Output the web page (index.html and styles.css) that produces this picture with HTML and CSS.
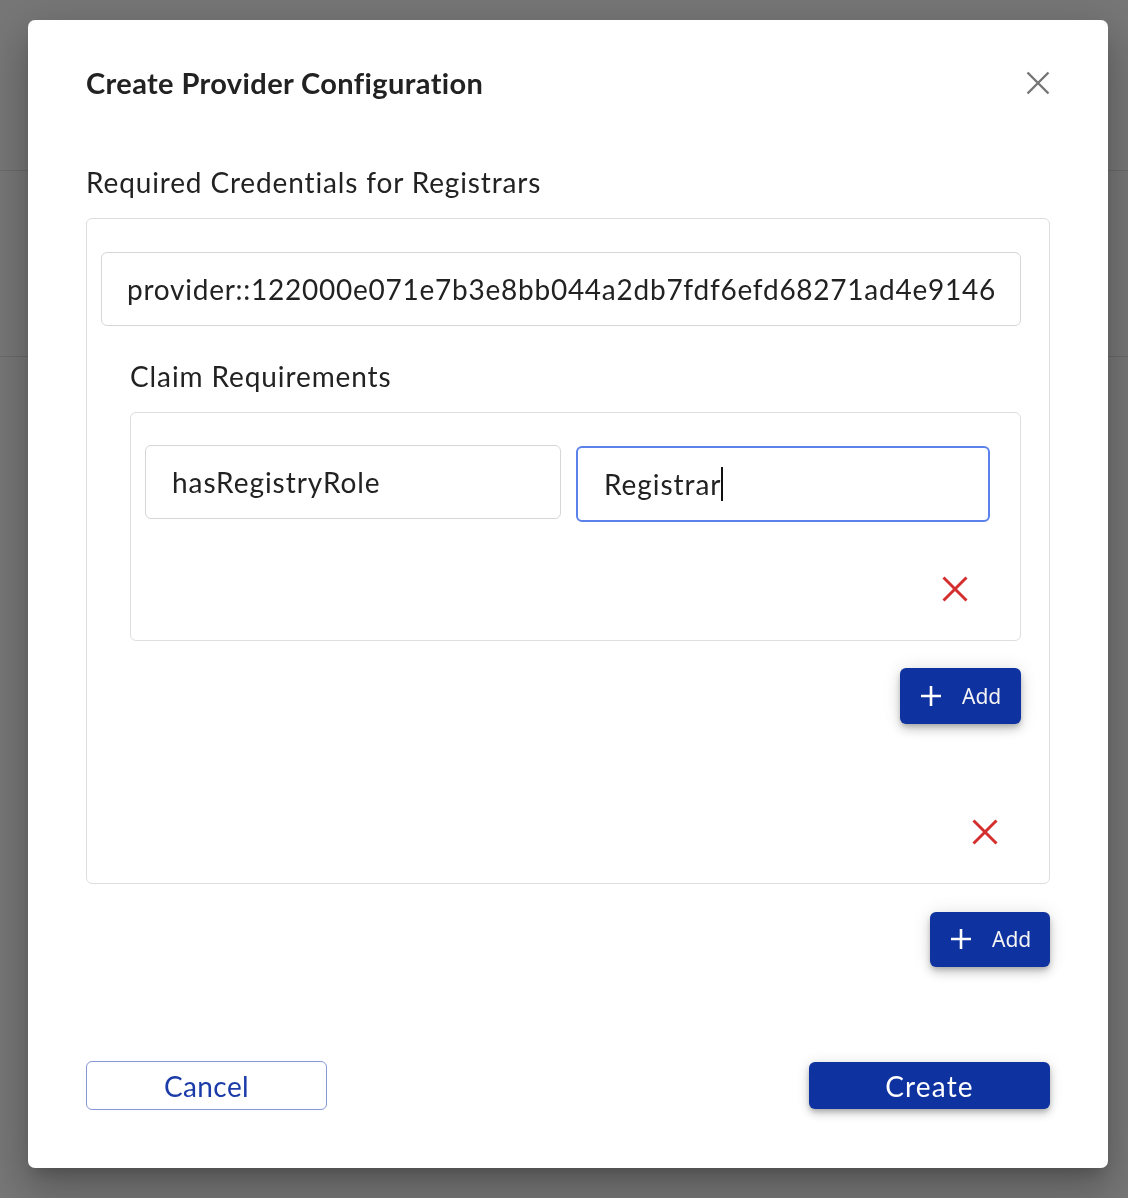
FILE: index.html
```html
<!DOCTYPE html>
<html>
<head>
  <meta charset="UTF-8">
  <title>Create Provider Configuration</title>
  <link rel="stylesheet" href="styles.css">
</head>
<body>
  <!-- page behind the dialog, dimmed -->
  <div class="page">
    <div class="page-header"></div>
    <div class="page-row"></div>
  </div>

  <div class="dialog">
    <div class="dialog-header">
      <h2 class="dialog-title">Create Provider Configuration</h2>
      <button class="close-button" title="Close">
        <svg width="24" height="24" viewBox="0 0 24 24">
          <path d="M1.5 1.5 L22.5 22.5 M22.5 1.5 L1.5 22.5" stroke="#757575" stroke-width="2.4" fill="none"/>
        </svg>
      </button>
    </div>

    <div class="section-label">Required Credentials for Registrars</div>

    <div class="credential-box">
      <div class="field">provider::122000e071e7b3e8bb044a2db7fdf6efd68271ad4e9146</div>

      <div class="claims">
        <div class="claims-label">Claim Requirements</div>
        <div class="claims-box">
          <div class="claim-row">
            <div class="field">hasRegistryRole</div>
            <div class="field focused">Registrar<span class="caret"></span></div>
          </div>
          <div class="remove-row">
            <button class="remove-button" title="Remove claim">
              <svg width="26" height="26" viewBox="0 0 26 26">
                <path d="M1.5 1.5 L24.5 24.5 M24.5 1.5 L1.5 24.5" stroke="#d32f2f" stroke-width="3" fill="none"/>
              </svg>
            </button>
          </div>
        </div>
        <div class="add-row">
          <button class="add-button">
            <svg width="20" height="20" viewBox="0 0 20 20">
              <path d="M10 0 V20 M0 10 H20" stroke="#fff" stroke-width="2.6" fill="none"/>
            </svg>
            <span>Add</span>
          </button>
        </div>
      </div>

      <div class="remove-row outer">
        <button class="remove-button" title="Remove credential">
          <svg width="26" height="26" viewBox="0 0 26 26">
            <path d="M1.5 1.5 L24.5 24.5 M24.5 1.5 L1.5 24.5" stroke="#d32f2f" stroke-width="3" fill="none"/>
          </svg>
        </button>
      </div>
    </div>

    <div class="add-row outer">
      <button class="add-button">
        <svg width="20" height="20" viewBox="0 0 20 20">
          <path d="M10 0 V20 M0 10 H20" stroke="#fff" stroke-width="2.6" fill="none"/>
        </svg>
        <span>Add</span>
      </button>
    </div>

    <div class="dialog-footer">
      <button class="btn btn-outline">Cancel</button>
      <button class="btn btn-primary">Create</button>
    </div>
  </div>
</body>
</html>
```

FILE: styles.css
```css
body {
  margin: 0;
  background: #777777;
  font-family: "Lato", "Noto Sans", sans-serif;
  font-variant-ligatures: none;
  color: #222;
  overflow: hidden;
}

.page-header {
  height: 170px;
  border-bottom: 1px solid #6a6a6a;
}

.page-row {
  height: 185px;
  border-bottom: 1px solid #6a6a6a;
}

button {
  font-family: inherit;
  cursor: pointer;
}

.dialog {
  position: fixed;
  top: 20px;
  left: 28px;
  width: 1080px;
  height: 1148px;
  box-sizing: border-box;
  padding: 46px 58px 58px;
  background: #fff;
  border-radius: 7px;
  display: flex;
  flex-direction: column;
  box-shadow: 0 11px 15px -7px rgba(0, 0, 0, 0.2),
    0 24px 38px 3px rgba(0, 0, 0, 0.14),
    0 9px 46px 8px rgba(0, 0, 0, 0.12);
}

.dialog-header {
  display: flex;
  align-items: center;
  justify-content: space-between;
}

.dialog-title {
  margin: 0;
  font-size: 29px;
  line-height: 1.2;
  font-weight: 700;
  letter-spacing: 0.38px;
  color: #222;
}

.close-button {
  border: none;
  background: none;
  padding: 0;
  width: 24px;
  height: 24px;
  margin-top: -1px;
  display: flex;
}

.section-label {
  margin-top: 65px;
  font-size: 28px;
  line-height: 1.2;
  letter-spacing: 0.86px;
  color: #222;
}

.credential-box {
  margin-top: 19px;
  border: 1px solid #dedede;
  border-radius: 6px;
  padding: 33px 28px 27px 14px;
}

.field {
  height: 74px;
  box-sizing: border-box;
  border: 1px solid #d6d6da;
  border-radius: 6px;
  padding: 0 25px;
  display: flex;
  align-items: center;
  font-size: 28px;
  letter-spacing: 0.75px;
  color: #222;
  white-space: nowrap;
}

.claim-row .field {
  padding: 0 26px;
  letter-spacing: 0.95px;
}

.claim-row .field.focused {
  height: 76px;
  margin-top: 1px;
  border: 2px solid #5b82ea;
  padding: 0 26px;
}

.caret {
  display: inline-block;
  width: 2px;
  height: 34px;
  background: #111;
}

.claims {
  margin-left: 29px;
}

.claims-label {
  margin-top: 34px;
  font-size: 28px;
  line-height: 1.2;
  letter-spacing: 0.9px;
}

.claims-box {
  margin-top: 18px;
  border: 1px solid #dedede;
  border-radius: 6px;
  padding: 32px 30px 27px 14px;
}

.claim-row {
  display: grid;
  grid-template-columns: 416fr 414fr;
  gap: 15px;
  align-items: start;
}

.remove-row {
  display: flex;
  justify-content: flex-end;
  margin-top: 43px;
  padding-right: 11px;
}

.remove-row.outer {
  margin-top: 84px;
  padding-right: 12px;
}

.remove-button {
  width: 48px;
  height: 48px;
  border: none;
  background: none;
  padding: 0;
  display: flex;
  align-items: center;
  justify-content: center;
}

.add-row {
  display: flex;
  justify-content: flex-end;
  margin-top: 27px;
}

.add-row.outer {
  margin-top: 28px;
}

.add-button {
  width: 121px;
  height: 56px;
  border: none;
  border-radius: 6px;
  background: #0e32a0;
  color: #f4f4f4;
  display: flex;
  align-items: center;
  gap: 21px;
  padding: 0 0 0 21px;
  font-family: "Noto Sans", sans-serif;
  font-size: 21px;
  box-shadow: 0 3px 5px -1px rgba(0, 0, 0, 0.2),
    0 6px 10px 0 rgba(0, 0, 0, 0.14),
    0 1px 18px 0 rgba(0, 0, 0, 0.12);
}

.add-row.outer .add-button {
  width: 120px;
  height: 55px;
}

.dialog-footer {
  margin-top: auto;
  display: flex;
  justify-content: space-between;
  align-items: center;
}

.btn {
  width: 241px;
  height: 48px;
  border-radius: 6px;
  font-size: 28px;
  letter-spacing: 1.2px;
  padding: 0;
}

.btn-outline {
  height: 49px;
  background: #fff;
  border: 1px solid #8497d4;
  color: #1b3ca8;
  letter-spacing: 0.4px;
}

.btn-primary {
  height: 47px;
  border: none;
  background: #0e32a0;
  color: #fff;
  box-shadow: 0 3px 5px -1px rgba(0, 0, 0, 0.2),
    0 5px 8px 0 rgba(0, 0, 0, 0.14),
    0 1px 14px 0 rgba(0, 0, 0, 0.12);
}
```
